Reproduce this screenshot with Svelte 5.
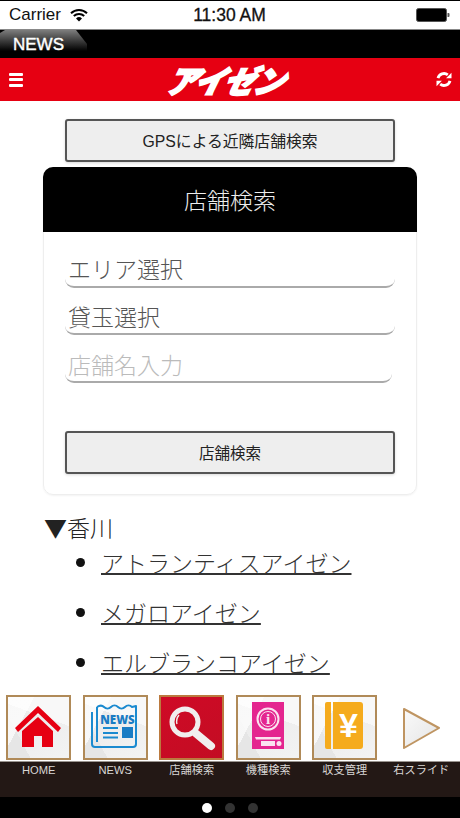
<script>
  const shops = ['アトランティスアイゼン', 'メガロアイゼン', 'エルブランコアイゼン'];
  const navItems = [
    { key: 'home', label: 'HOME' },
    { key: 'news', label: 'NEWS' },
    { key: 'search', label: '店舗検索' },
    { key: 'info', label: '機種検索' },
    { key: 'money', label: '収支管理' },
    { key: 'next', label: '右スライド' }
  ];
  const dots = [0, 1, 2];
  let active = 0;
</script>

<div class="screen">
  <div class="statusbar">
    <div class="status-left">
      <span>Carrier</span>
      <svg class="wifi" width="18" height="14" viewBox="0 0 18 14">
        <path d="M1 5.2a11.5 11.5 0 0 1 16 0" fill="none" stroke="#000" stroke-width="2" />
        <path d="M3.8 8a7.5 7.5 0 0 1 10.4 0" fill="none" stroke="#000" stroke-width="2" />
        <path d="M9 13.5 6 10.4a4.3 4.3 0 0 1 6 0z" fill="#000" />
      </svg>
    </div>
    <div class="time">11:30 AM</div>
    <svg class="battery" width="34" height="14" viewBox="0 0 34 14">
      <rect x="0.5" y="0.5" width="30" height="13" rx="2" fill="#000" stroke="#555" />
      <path d="M31.5 5h1a1 1 0 0 1 1 1v2a1 1 0 0 1-1 1h-1z" fill="#555" />
    </svg>
  </div>

  <div class="newsbar">
    <div class="newstab">NEWS</div>
  </div>

  <header class="topbar">
    <div class="burger"><i></i><i></i><i></i></div>
    <div class="logo">アイゼン</div>
    <svg class="refresh" width="16" height="17" viewBox="0 0 16 17">
      <path d="M2 7.200A6.200 6.200 0 0 1 11.800 3.800" fill="none" stroke="#fff" stroke-width="2.800" />
      <path d="M15.500 1.800v5.400h-5.400z" fill="#fff" />
      <path d="M14 9.800A6.200 6.200 0 0 1 4.200 13.200" fill="none" stroke="#fff" stroke-width="2.800" />
      <path d="M0.500 15.200V9.800h5.400z" fill="#fff" />
    </svg>
  </header>

  <main class="content">
    <button class="btn gps">GPSによる近隣店舗検索</button>

    <section class="card">
      <h2 class="card-title">店舗検索</h2>
      <div class="card-body">
        <div class="field">エリア選択</div>
        <div class="field">貸玉選択</div>
        <input class="field name" placeholder="店舗名入力" />
        <button class="btn submit">店舗検索</button>
      </div>
    </section>

    <div class="area">▼香川</div>
    <ul class="shops">
      {#each shops as shop}
        <li><a href="#top">{shop}</a></li>
      {/each}
    </ul>
  </main>

  <nav class="dock">
    <div class="tiles">
      {#each navItems as item}
        <div class="cell">
          {#if item.key === 'next'}
            <svg class="arrow" width="40" height="46" viewBox="0 0 40 46">
              <defs>
                <linearGradient id="arrowFill" x1="0" y1="0" x2="1" y2="1">
                  <stop offset="0" stop-color="#fafafa" />
                  <stop offset="1" stop-color="#e4e4e4" />
                </linearGradient>
              </defs>
              <path d="M3 4 38 23 3 43z" fill="url(#arrowFill)" stroke="#bf9562" stroke-width="2" stroke-linejoin="round" />
            </svg>
          {:else}
            <div class="tile {item.key}">
              <svg width="61" height="61" viewBox="2 2 61 61">
                {#if item.key === 'home'}
                  <path d="M32 11 55 33 52 37 32 18 12 37 9 33z" fill="#e60012" />
                  <path d="M32 22 47 36V52H36V41H28V52H16V36z" fill="#e60012" />
                {:else if item.key === 'news'}
                  <path d="M14 12c3-2 5-2 7 0s5 2 7 0 5-2 7 0 5 2 7 0 5-2 7 0l4-1V49a3 3 0 0 1-3 3H12a3 3 0 0 1-3-3V17" fill="none" stroke="#1a8ad0" stroke-width="2" stroke-linejoin="round" />
                  <path d="M14 12V47" fill="none" stroke="#1a8ad0" stroke-width="2" />
                  <text class="news-word" x="34.500" y="28.500" text-anchor="middle">NEWS</text>
                  <path d="M20 33H35M20 38H35M20 42.500H35" stroke="#1a8ad0" stroke-width="1.800" />
                  <rect x="39" y="32" width="11" height="11" fill="#1a7cc4" />
                {:else if item.key === 'search'}
                  <circle cx="26" cy="27" r="13" fill="none" stroke="#f1eeee" stroke-width="5" />
                  <path d="M18 29a10 10 0 0 1 2-9" fill="none" stroke="#f1eeee" stroke-width="1.400" />
                  <path d="M37 38.500 52 51" stroke="#f1eeee" stroke-width="8" stroke-linecap="round" />
                {:else if item.key === 'info'}
                  <rect x="16" y="7" width="32" height="47" fill="#e4268f" />
                  <circle cx="32" cy="24" r="10.500" fill="none" stroke="#fbe3f0" stroke-width="2" />
                  <circle cx="32" cy="24" r="7.500" fill="none" stroke="#fbe3f0" stroke-width="1" />
                  <text class="info-i" x="32" y="29" text-anchor="middle">i</text>
                  <path d="M19 42H45L44 44.500H20z" fill="#fbe3f0" />
                  <rect x="25" y="46" width="14" height="5" fill="#fbe3f0" />
                  <circle cx="43" cy="48.500" r="2.500" fill="#fbe3f0" />
                {:else if item.key === 'money'}
                  <path d="M15 7H19V54H15a2 2 0 0 1-2-2V9a2 2 0 0 1 2-2z" fill="#f5ab1d" />
                  <path d="M21 7H48a3 3 0 0 1 3 3V51a3 3 0 0 1-3 3H21z" fill="#f5ab1d" />
                  <text class="yen" x="36.500" y="42" text-anchor="middle">¥</text>
                {/if}
              </svg>
            </div>
          {/if}
        </div>
      {/each}
    </div>
    <div class="labels">
      {#each navItems as item}
        <span>{item.label}</span>
      {/each}
    </div>
    <div class="pager">
      {#each dots as d}
        <i class:on={d === active}></i>
      {/each}
    </div>
  </nav>
</div>

<style>
  :global(body) {
    margin: 0;
    background: #fff;
  }
  .screen {
    width: 460px;
    height: 818px;
    display: flex;
    flex-direction: column;
    overflow: hidden;
    font-family: "Noto Sans CJK JP", "Liberation Sans", sans-serif;
    font-weight: 300;
    color: #333;
  }

  .statusbar {
    border-top: 1px solid #000;
    border-bottom: 1px solid #888;
    box-sizing: content-box;
    height: 28px;
    display: grid;
    grid-template-columns: 1fr auto 1fr;
    align-items: center;
    padding: 0 10px 0 9px;
    font-family: "Liberation Sans", sans-serif;
    font-weight: 400;
    font-size: 17px;
    color: #111;
  }
  .status-left {
    display: flex;
    align-items: center;
    gap: 9px;
  }
  .time {
    font-size: 17.500px;
    -webkit-text-stroke: 0.3px #111;
  }
  .battery {
    justify-self: end;
  }

  .newsbar {
    height: 28px;
    background: #000;
  }
  .newstab {
    width: 87px;
    height: 28px;
    box-sizing: border-box;
    padding: 4px 0 0 13px;
    font-family: "Liberation Sans", sans-serif;
    font-weight: 400;
    font-size: 17px;
    line-height: 21px;
    color: #fff;
    -webkit-text-stroke: 0.4px #fff;
    background: linear-gradient(#7d7d7d, #3a3a3a 40%, #000 75%);
    clip-path: polygon(5px 0, 76px 0, 87px 14px, 87px 28px, 0 28px, 0 3px);
  }

  .topbar {
    height: 43px;
    background: #e60012;
    display: flex;
    align-items: center;
    justify-content: space-between;
    padding: 0 8px 0 9px;
  }
  .burger {
    width: 14px;
    display: flex;
    flex-direction: column;
    gap: 2.500px;
  }
  .burger i {
    height: 3px;
    border-radius: 1px;
    background: #fff;
  }
  .logo {
    font-size: 31px;
    font-weight: 900;
    line-height: 34px;
    letter-spacing: -1.500px;
    color: #fff;
    transform: skewX(-26deg);
    -webkit-text-stroke: 2px #fff;
  }

  .content {
    flex: 1;
    min-height: 0;
    overflow: hidden;
    padding-top: 18px;
  }
  .btn {
    display: block;
    width: 330px;
    height: 43px;
    padding: 0;
    background: #eee;
    border: 2px solid #555;
    border-radius: 3px;
    box-shadow: 0 1px 3px rgba(0, 0, 0, 0.15);
    font-family: "Liberation Sans", "Noto Sans CJK JP", sans-serif;
    font-weight: 400;
    font-size: 15.500px;
    color: #222;
  }
  .gps {
    margin: 0 0 5px 65px;
    font-size: 15.800px;
  }
  .card {
    width: 374px;
    margin-left: 43px;
    box-sizing: border-box;
    border: 1px solid #eee;
    border-radius: 10px;
    box-shadow: 0 1px 2px rgba(0, 0, 0, 0.05);
  }
  .card-title {
    height: 65px;
    margin: -1px -1px 0;
    border-radius: 10px 10px 0 0;
    background: #000;
    color: #eee;
    font-size: 23px;
    font-weight: 300;
    line-height: 65px;
    text-align: center;
  }
  .card-body {
    padding: 8px 20px 20px 21px;
  }
  .field {
    display: block;
    width: 330px;
    height: 47.500px;
    box-sizing: border-box;
    padding: 12px 0 0 3px;
    border: 0;
    border-bottom: 2px solid #aaa;
    border-radius: 0 0 9px 9px;
    outline: 0;
    background: transparent;
    font-family: inherit;
    font-weight: 300;
    font-size: 23px;
    line-height: 32px;
    color: #555;
  }
  .name {
    width: 327px;
  }
  .name::placeholder {
    color: #bbb;
    opacity: 1;
  }
  .submit {
    margin-top: 48px;
  }

  .area {
    margin: 14px 0 0 44px;
    font-size: 23px;
    line-height: 36px;
    color: #222;
  }
  .shops {
    margin: 0;
    padding: 0 0 0 101px;
    font-size: 23px;
    color: #111;
  }
  .shops li {
    height: 50px;
    line-height: 34px;
  }
  .shops a {
    color: #333;
    text-decoration-thickness: 2px;
  }

  .dock {
    background: #fff;
  }
  .tiles {
    display: grid;
    grid-template-columns: repeat(6, 76.500px);
    padding: 0 0 0 0.500px;
    height: 66px;
    align-items: start;
  }
  .cell {
    display: flex;
    justify-content: center;
  }
  .tile {
    width: 65px;
    height: 65px;
    box-sizing: border-box;
    border: 2px solid #b08a58;
    background:
      linear-gradient(118deg, rgba(255, 255, 255, 0.7) 0 28%, transparent 28%),
      linear-gradient(62deg, #e6e6e6 0 24%, transparent 24%),
      linear-gradient(200deg, #f8f8f8 0 35%, transparent 35%),
      linear-gradient(150deg, #e8e8e8, #f3f3f3);
  }
  .tile svg {
    display: block;
  }
  .tile.search {
    background: linear-gradient(150deg, #cf0a26, #c30d23);
    border-color: #bb7a3f;
  }
  .arrow {
    margin: 10px 0 0 -1px;
  }
  .news-word {
    font-family: "Open Sans", "Liberation Sans", sans-serif;
    font-size: 11.500px;
    font-weight: 800;
    fill: #1a7cc4;
  }
  .info-i {
    font-family: "Liberation Serif", serif;
    font-size: 15px;
    font-weight: 700;
    fill: #fbe3f0;
  }
  .yen {
    font-family: "Liberation Sans", sans-serif;
    font-size: 34px;
    font-weight: 700;
    fill: #fff;
  }

  .labels {
    height: 36px;
    display: grid;
    grid-template-columns: repeat(6, 76.500px);
    padding-left: 0.500px;
    background: #231815;
    border-top: 1px solid #9a948f;
    box-sizing: border-box;
    color: #d8d6d4;
    font-family: "Liberation Sans", "Noto Sans CJK JP", sans-serif;
    font-weight: 400;
    font-size: 11.200px;
    line-height: 17px;
    text-align: center;
  }
  .pager {
    height: 21px;
    background: #000;
    display: flex;
    justify-content: center;
    align-items: center;
    gap: 13px;
  }
  .pager i {
    width: 10px;
    height: 10px;
    border-radius: 50%;
    background: #333;
  }
  .pager i.on {
    background: #fff;
  }
</style>
